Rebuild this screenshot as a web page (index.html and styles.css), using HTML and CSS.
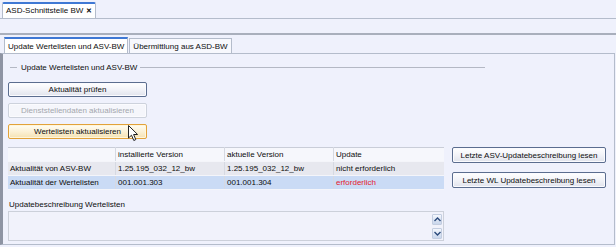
FILE: index.html
```html
<!DOCTYPE html>
<html lang="de">
  <head>
    <meta charset="UTF-8" />
    <title>ASD-Schnittstelle BW</title>
    <link rel="stylesheet" href="styles.css">
  </head>
  <body>
    <div class="doc-tabs">
      <div class="doc-tab">ASD-Schnittstelle BW <span class="close">&#x2715;</span></div>
    </div>
    <div class="toolbar"></div>
    <div class="page-tabs">
      <div class="page-tab active">Update Wertelisten und ASV-BW</div>
      <div class="page-tab">Übermittlung aus ASD-BW</div>
    </div>
    <div class="panel">
      <div class="group-title">
        <span class="dash"></span>
        <span class="legend">Update Wertelisten und ASV-BW</span>
        <span class="rule"></span>
      </div>

      <div class="actions">
        <button type="button" class="btn">Aktualität prüfen</button>
        <button type="button" class="btn" disabled>Dienststellendaten aktualisieren</button>
        <button type="button" class="btn hover">Wertelisten aktualisieren
          <svg class="cursor" width="12" height="17" viewBox="0 0 12 17">
            <path d="M0.5 0.5 L0.5 13 L3.5 10.2 L5.8 15.5 L7.8 14.6 L5.6 9.5 L9.6 9.5 Z" fill="#fff" stroke="#222" stroke-width="1"/>
          </svg>
        </button>
      </div>

      <div class="status-row">
        <table class="grid">
          <tr class="head">
            <td></td>
            <td>installierte Version</td>
            <td>aktuelle Version</td>
            <td>Update</td>
          </tr>
          <tr class="row">
            <td>Aktualität von ASV-BW</td>
            <td>1.25.195_032_12_bw</td>
            <td>1.25.195_032_12_bw</td>
            <td>nicht erforderlich</td>
          </tr>
          <tr class="row selected">
            <td>Aktualität der Wertelisten</td>
            <td>001.001.303</td>
            <td>001.001.304</td>
            <td class="required">erforderlich</td>
          </tr>
        </table>
        <div class="side-buttons">
          <button type="button" class="btn wide">Letzte ASV-Updatebeschreibung lesen</button>
          <button type="button" class="btn wide">Letzte WL Updatebeschreibung lesen</button>
        </div>
      </div>

      <div class="desc-label">Updatebeschreibung Wertelisten</div>
      <div class="memo">
        <div class="scroll">
          <span class="arrow">
            <svg width="7" height="5" viewBox="0 0 7 5"><path d="M0.5 4 L3.5 1 L6.5 4" fill="none" stroke="#2c4a7c" stroke-width="1.4"/></svg>
          </span>
          <span class="arrow">
            <svg width="7" height="5" viewBox="0 0 7 5"><path d="M0.5 1 L3.5 4 L6.5 1" fill="none" stroke="#2c4a7c" stroke-width="1.4"/></svg>
          </span>
        </div>
      </div>
    </div>
  </body>
</html>
```

FILE: styles.css
```css
body {
  margin: 0;
  width: 616px;
  height: 247px;
  overflow: hidden;
  background-color: #eff1fc;
  font-family: "Liberation Sans", Arial, sans-serif;
  font-size: 8px;
  color: #0d0d0d;
}

.doc-tabs {
  height: 18px;
  padding-left: 2px;
  display: flex;
  align-items: flex-end;
  border-bottom: 1px solid #b4bccb;
}
.doc-tab {
  height: 14px;
  width: 89px;
  padding-left: 3px;
  background: #fff;
  border: 1px solid #b4bccb;
  border-top: 2px solid #3f78d4;
  border-bottom: none;
  border-radius: 2px 2px 0 0;
  line-height: 14px;
  white-space: nowrap;
}
.close {
  font-size: 7px;
  font-weight: bold;
}

.toolbar {
  height: 14px;
  border-bottom: 2px solid #a9afbc;
}

.page-tabs {
  height: 18px;
  padding-left: 4px;
  display: flex;
  align-items: flex-end;
}
.page-tab {
  height: 14px;
  padding: 0 3px;
  background: #f7f8fd;
  border: 1px solid #b4bccb;
  border-bottom: none;
  line-height: 15px;
  white-space: nowrap;
}
.page-tab.active {
  background: #fff;
  border-top: 2px solid #3f78d4;
  margin-right: 1px;
}

.panel {
  height: 190px;
  width: 600px;
  border: 1px solid #b4bccb;
  border-left: 3px solid #8e94a3;
  padding: 0 6px 0 5px;
  display: flex;
  flex-direction: column;
}

.group-title {
  display: flex;
  align-items: center;
  height: 9px;
  margin-top: 9px;
  width: 477px;
}
.group-title .dash {
  width: 7px;
  height: 1px;
  margin-left: 2px;
  background: #b4b8c4;
}
.group-title .legend {
  padding: 0 3px 0 4px;
  white-space: nowrap;
}
.group-title .rule {
  flex: 1;
  height: 1px;
  background: #b4b8c4;
}

.actions {
  display: flex;
  flex-direction: column;
  gap: 6px;
  margin-top: 10px;
  width: 139px;
}

.btn {
  position: relative;
  height: 15px;
  padding: 0;
  font-family: inherit;
  font-size: 8px;
  color: #0d0d0d;
  border: 1px solid #5b6d8f;
  border-radius: 2px;
  background: linear-gradient(#ffffff, #f2f3f8 50%, #e0e3ec);
  box-shadow: inset 0 0 0 1px #fbfbfe;
  white-space: nowrap;
}
.btn:disabled {
  color: #a4a7ae;
  border-color: #cdd2dc;
  background: #f5f6fb;
}
.btn.hover {
  border-color: #e2a23a;
  background: linear-gradient(#fffdf4, #fbf1d6 50%, #f5e2b3);
  box-shadow: inset 0 0 0 1px #fff6dc;
}
.cursor {
  position: absolute;
  left: 119px;
  top: 0;
}

.status-row {
  display: flex;
  align-items: flex-start;
  margin-top: 8px;
}

.grid {
  width: 436px;
  border-collapse: collapse;
  table-layout: fixed;
  border-top: 1px solid #c9cdd8;
}
.grid tr {
  height: 14px;
}
.grid td {
  padding: 0 0 0 2px;
  line-height: 13px;
  white-space: nowrap;
  overflow: hidden;
  border-left: 1px solid #d6d9e2;
  border-bottom: 1px solid #f4f5fa;
}
.grid td:first-child {
  width: 105px;
  border-left: none;
}
.grid td:nth-child(2),
.grid td:nth-child(3) {
  width: 106px;
}
.grid .head td {
  background: #f6f7fc;
}
.grid .row td {
  background: #e7e8ef;
}
.grid .row.selected td {
  background: #cadbf5;
}
.grid .required {
  color: #e4202e;
}

.side-buttons {
  display: flex;
  flex-direction: column;
  gap: 9px;
  margin-left: 8px;
}
.btn.wide {
  width: 154px;
  height: 16px;
}

.desc-label {
  margin-top: 10px;
  margin-left: 1px;
  height: 10px;
  line-height: 10px;
}

.memo {
  width: 434px;
  height: 28px;
  margin-top: 1px;
  border: 1px solid #ccd0da;
  background: #f1f2fb;
  display: flex;
  justify-content: flex-end;
}
.scroll {
  display: flex;
  flex-direction: column;
  justify-content: space-between;
  padding: 2px 1px 1px 0;
}
.arrow {
  width: 10px;
  height: 11px;
  display: flex;
  align-items: center;
  justify-content: center;
  border: 1px solid #c3cde0;
  border-radius: 1px;
  background: linear-gradient(#f4f7fd, #c9d6ec);
  box-sizing: border-box;
}
```
